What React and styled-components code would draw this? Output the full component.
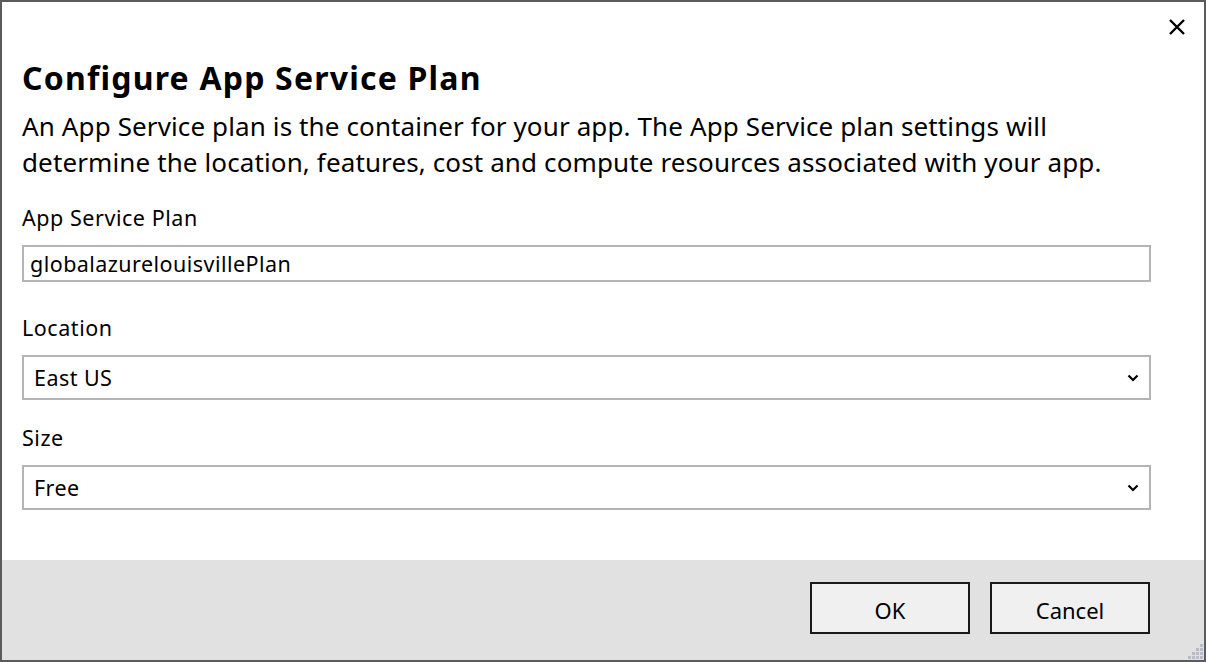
import React from "react";
import styled, { createGlobalStyle } from "styled-components";

const Global = createGlobalStyle`
  html, body { margin: 0; padding: 0; background: #fff; }
  body { font-family: "Segoe UI", "Noto Sans", "Open Sans", sans-serif; }
`;

const Window = styled.div`
  box-sizing: border-box;
  width: 1206px;
  height: 662px;
  border: 2px solid #5b5b5b;
  background: #fff;
  display: flex;
  flex-direction: column;
  position: relative;
  color: #000;
`;

const CloseButton = styled.button`
  position: absolute;
  top: 10px;
  right: 12px;
  width: 30px;
  height: 30px;
  padding: 0;
  border: none;
  background: transparent;
  display: flex;
  align-items: center;
  justify-content: center;
`;

const Body = styled.div`
  flex: 1;
  padding: 56px 53px 0 20px;
  display: flex;
  flex-direction: column;
`;

const Title = styled.h1`
  margin: 0;
  font-size: 32px;
  font-weight: 700;
  line-height: 40px;
  letter-spacing: 1.2px;
`;

const Description = styled.p`
  margin: 10px 0 0;
  font-size: 26px;
  line-height: 36px;
  letter-spacing: 0.12px;
  white-space: nowrap;
`;

const Field = styled.div`
  display: flex;
  flex-direction: column;
  margin-top: ${(p) => p.$top}px;
`;

const Label = styled.label`
  font-size: 21.5px;
  line-height: 28px;
  letter-spacing: 0.55px;
  margin-bottom: ${(p) => p.$gap}px;
`;

const TextInput = styled.div`
  box-sizing: border-box;
  height: 37px;
  margin-top: 1px;
  border: 2px solid #b4b4b4;
  padding: 0 6px;
  font-size: 21.5px;
  letter-spacing: 0.45px;
  display: flex;
  align-items: center;
`;

const Select = styled.div`
  box-sizing: border-box;
  height: 45px;
  border: 2px solid #b4b4b4;
  padding: 0 10px 0 10px;
  font-size: 21.5px;
  letter-spacing: 0.45px;
  display: flex;
  align-items: center;
  justify-content: space-between;
`;

const Footer = styled.div`
  height: 100px;
  background: #e1e1e1;
  display: flex;
  justify-content: flex-end;
  align-items: flex-start;
  gap: 20px;
  padding: 22px 54px 0 0;
  box-sizing: border-box;
  position: relative;
`;

const Button = styled.button`
  box-sizing: border-box;
  width: 160px;
  height: 52px;
  background: #f0f0f0;
  border: 2px solid #1a1a1a;
  font-family: inherit;
  font-size: 22px;
  color: #000;
  padding: 3px 0 0;
`;

const Grip = styled.svg`
  position: absolute;
  right: 0;
  bottom: 0;
`;

const Chevron = () => (
  <svg width="12" height="8" viewBox="0 0 12 8">
    <path d="M1.5 1.5 L6 6 L10.5 1.5" fill="none" stroke="#000" strokeWidth="2.2" />
  </svg>
);

export default function App() {
  const dots = [
    [12, 0],
    [8, 4], [12, 4],
    [4, 8], [8, 8], [12, 8],
    [0, 12], [4, 12], [8, 12], [12, 12],
  ];
  return (
    <>
      <Global />
      <Window>
        <CloseButton aria-label="Close">
          <svg width="18" height="18" viewBox="0 0 18 18">
            <path d="M2 2 L16 16 M16 2 L2 16" stroke="#000" strokeWidth="2.4" />
          </svg>
        </CloseButton>
        <Body>
          <Title>Configure App Service Plan</Title>
          <Description>
            An App Service plan is the container for your app. The App Service plan settings will
            <br />
            determine the location, features, cost and compute resources associated with your app.
          </Description>
          <Field $top={24}>
            <Label $gap={12}>App Service Plan</Label>
            <TextInput>globalazurelouisvillePlan</TextInput>
          </Field>
          <Field $top={32}>
            <Label $gap={13}>Location</Label>
            <Select>
              <span>East US</span>
              <Chevron />
            </Select>
          </Field>
          <Field $top={24}>
            <Label $gap={13}>Size</Label>
            <Select>
              <span>Free</span>
              <Chevron />
            </Select>
          </Field>
        </Body>
        <Footer>
          <Button>OK</Button>
          <Button>Cancel</Button>
          <Grip width="16" height="16" viewBox="0 0 16 16">
            {dots.map(([x, y], i) => (
              <rect key={i} x={x} y={y} width="3" height="3" fill="#b8bcc8" />
            ))}
          </Grip>
        </Footer>
      </Window>
    </>
  );
}
